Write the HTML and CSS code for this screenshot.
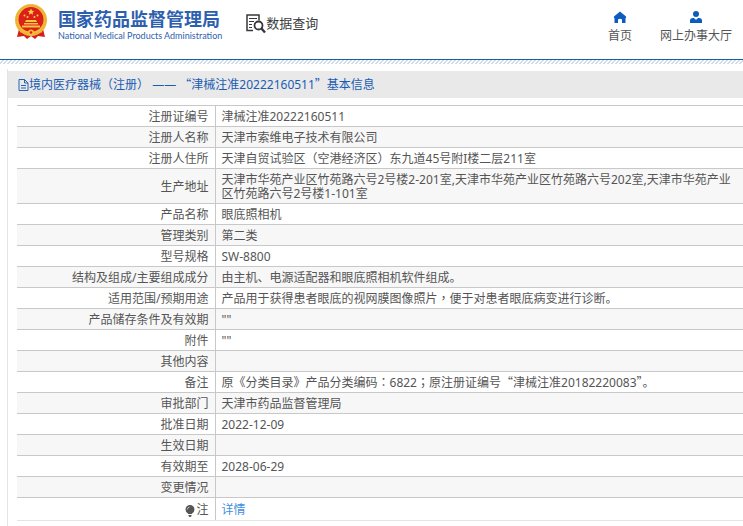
FILE: index.html
```html
<!DOCTYPE html>
<html lang="zh-CN">
<head>
<meta charset="utf-8">
<title>数据查询</title>
<link rel="stylesheet" href="styles.css">
</head>
<body>
<header class="header">
  <a class="brand" href="#">
    <svg class="emblem" viewBox="0 0 34 36" aria-hidden="true">
      <path d="M5 25 L3 33 L10 32 L13 35 L17 32 L21 35 L24 32 L31 33 L29 25Z" fill="#d51f1c"/>
      <circle cx="17" cy="16" r="16" fill="#f0b93a"/>
      <circle cx="17" cy="16" r="14.500" fill="none" stroke="#e8a634" stroke-dasharray="2 1.400"/>
      <circle cx="17" cy="15.500" r="12.500" fill="#dc2018"/>
      <path d="M17 4.500l1 2.200 2.300.2-1.700 1.500.5 2.300-2.100-1.200-2.100 1.200.5-2.300-1.700-1.500 2.300-.2z" fill="#f9d04a"/>
      <g fill="#f9d04a"><circle cx="10.500" cy="11.500" r="1"/><circle cx="13.500" cy="13" r="1"/><circle cx="20.500" cy="13" r="1"/><circle cx="23.500" cy="11.500" r="1"/></g>
      <path d="M12 16h10l1 2H11zM10 19h14v1.500H10zM8 21.500h18v2H8z" fill="#f6c544"/>
      <path d="M6 28q5-2 8 0t6 0 8 0" fill="none" stroke="#f3bd3b" stroke-width="1"/>
      <circle cx="17" cy="28.500" r="3" fill="#f3bd3b"/>
      <circle cx="17" cy="28.500" r="1.300" fill="#d51f1c"/>
    </svg>
    <span class="brand-text">
      <span class="brand-name">国家药品监督管理局</span>
      <span class="brand-sub">National Medical Products Administration</span>
    </span>
  </a>
  <h1 class="section">
    <svg class="section-icon" viewBox="0 0 20 20" aria-hidden="true" fill="none" stroke="#37383d">
      <path d="M13 6.500V1H1v15.500h6" stroke-width="1.500"/>
      <path d="M3 4.500h8M3 7.500h5M3 10.500h3M3 13.500h3" stroke-width="1.200"/>
      <circle cx="12.500" cy="11.500" r="4" stroke-width="1.800"/>
      <path d="M15.500 14.500l3.500 4" stroke-width="2.400"/>
    </svg>
    <span>数据查询</span>
  </h1>
  <nav class="nav">
    <a href="#">
      <svg viewBox="0 0 12 12" aria-hidden="true"><path d="M6 .5L0 5.500V7h.500v5H4V8.500q2-1.500 4 0V12h3.500V7h.500V5.500z" fill="#0b5cbd"/></svg>
      <span>首页</span>
    </a>
    <a href="#">
      <svg viewBox="0 0 12 12" aria-hidden="true"><circle cx="6" cy="3" r="3" fill="#0b5cbd"/><path d="M0 12V9.500Q0 7 3 7h1l2 2 2-2h1q3 0 3 2.500V12z" fill="#0b5cbd"/></svg>
      <span>网上办事大厅</span>
    </a>
  </nav>
</header>
<main class="panel">
  <h2 class="panel-title">
    <svg viewBox="0 0 11 12" aria-hidden="true" fill="none" stroke="#2563b8"><path d="M1 .5h5.500l3.500 3.500v7.500H1zM6.500.5V4H10M3 6.500h5M3 9h5"/></svg><span>境内医疗器械<span class="mid" lang="zh-Hant">（</span>注册<span class="mid" lang="zh-Hant">）</span> —— <span class="quote">“</span>津械注准20222160511<span class="quote">”</span>基本信息</span>
  </h2>
  <table class="info">
    <tbody>
      <tr><th scope="row">注册证编号</th><td>津械注准20222160511</td></tr>
      <tr><th scope="row">注册人名称</th><td>天津市索维电子技术有限公司</td></tr>
      <tr><th scope="row">注册人住所</th><td>天津自贸试验区<span class="mid" lang="zh-Hant">（</span>空港经济区<span class="mid" lang="zh-Hant">）</span>东九道45号附I楼二层211室</td></tr>
      <tr><th scope="row">生产地址</th><td>天津市华苑产业区竹苑路六号2号楼2-201室,天津市华苑产业区竹苑路六号202室,天津市华苑产业区竹苑路六号2号楼1-101室</td></tr>
      <tr><th scope="row">产品名称</th><td>眼底照相机</td></tr>
      <tr><th scope="row">管理类别</th><td>第二类</td></tr>
      <tr><th scope="row">型号规格</th><td>SW-8800</td></tr>
      <tr><th scope="row">结构及组成/主要组成成分</th><td>由主机、电源适配器和眼底照相机软件组成。</td></tr>
      <tr><th scope="row">适用范围/预期用途</th><td>产品用于获得患者眼底的视网膜图像照片<span class="mid" lang="zh-Hant">，</span>便于对患者眼底病变进行诊断。</td></tr>
      <tr><th scope="row">产品储存条件及有效期</th><td>""</td></tr>
      <tr><th scope="row">附件</th><td>""</td></tr>
      <tr><th scope="row">其他内容</th><td></td></tr>
      <tr><th scope="row">备注</th><td>原《分类目录》产品分类编码<span class="mid" lang="zh-Hant">：</span>6822<span class="mid" lang="zh-Hant">；</span>原注册证编号<span class="quote">“</span>津械注准20182220083<span class="quote">”</span>。</td></tr>
      <tr><th scope="row">审批部门</th><td>天津市药品监督管理局</td></tr>
      <tr><th scope="row">批准日期</th><td>2022-12-09</td></tr>
      <tr><th scope="row">生效日期</th><td></td></tr>
      <tr><th scope="row">有效期至</th><td>2028-06-29</td></tr>
      <tr><th scope="row">变更情况</th><td></td></tr>
      <tr class="note"><th scope="row"><svg viewBox="0 0 10 12" aria-hidden="true"><path d="M5 0a4.500 4.500 0 0 1 4.500 4.500Q9.500 7 7 8.500V9H3v-.5Q.5 7 .5 4.500A4.500 4.500 0 0 1 5 0zM3.500 10h3v1l-1 1h-1l-1-1z" fill="#555"/><path d="M2.200 4.500Q2.500 2.500 4.500 2" fill="none" stroke="#ddd" stroke-width=".8"/></svg>注</th><td><a href="#">详情</a></td></tr>
    </tbody>
  </table>
</main>
</body>
</html>
```
FILE: styles.css
```css
* {
  box-sizing: border-box;
}

body {
  margin: 0;
  background: #fff;
  color: #555;
  font: 12px/14px "Noto Sans", "Noto Sans CJK SC", sans-serif;
}

a {
  color: inherit;
  text-decoration: none;
}

svg {
  display: block;
  flex: none;
}

.header {
  display: flex;
  align-items: flex-start;
  height: 59px;
  padding: 4px 11px 0 14px;
}

/* blue rule with a thin hatched strip below the header */
.header + .panel::before {
  content: "";
  display: block;
  height: 4px;
  margin: 0 0 7px -8px;
  border-top: 1px solid #1d5b9b;
  background: linear-gradient(135deg, #fff 37%, #cfdcec 37% 50%, #fff 50% 87%, #cfdcec 87%) 0 0 / 4px 4px;
}

.brand {
  display: flex;
  gap: 10px;
}

.emblem {
  width: 34px;
  height: 36px;
}

.brand-text {
  display: flex;
  flex-direction: column;
  padding-top: 4px;
  color: #2e5fae;
  white-space: nowrap;
}

.brand-name {
  font: bold 18px/20px "Noto Sans CJK SC", sans-serif;
}

.brand-sub {
  font: 400 9px/12px Lato, sans-serif;
  padding-top: 2px;
}

.section {
  display: flex;
  margin: 10px 0 0 24px;
  color: #3b3c41;
  font: 400 13px/18px "Noto Sans CJK SC", sans-serif;
  white-space: nowrap;
}

.section-icon {
  width: 20px;
  height: 20px;
}

.nav {
  display: flex;
  gap: 28px;
  margin: 7px 0 0 auto;
}

.nav a {
  display: flex;
  flex-direction: column;
  align-items: center;
  gap: 6px;
  white-space: nowrap;
}

.nav svg {
  width: 12px;
  height: 12px;
}

.panel {
  margin-left: 7px;
  padding-bottom: 5px;
  border-left: 1px solid #e4e4e4;
  border-image: linear-gradient(transparent 11px, #e4e4e4 11px) 1;
}

.panel-title {
  display: flex;
  align-items: center;
  height: 27px;
  margin: 0 0 7px;
  padding-left: 10px;
  background: #e9e9e9;
  color: #1a5cb4;
  font-size: 12px;
  font-weight: normal;
}

.panel-title svg {
  width: 11px;
  height: 12px;
}

.quote,
.mid {
  font-family: "Noto Sans CJK SC", sans-serif;
  line-height: 1px;
}

.mid {
  font-family: "Noto Sans CJK TC", sans-serif;
}

.info {
  width: calc(100% - 9px);
  margin-left: 9px;
  border-collapse: collapse;
}

.info th,
.info td {
  height: 21px;
  padding: 4px 6px 2px;
  border-top: 1px solid #c8c8c8;
}

.info th {
  width: 198px;
  border-right: 1px solid #c8c8c8;
  font-weight: normal;
  text-align: right;
}

.info td {
  text-align: left;
}

.info tr:nth-child(even) {
  background: #f7f7f7;
}

.info .note th,
.info .note td {
  height: 23px;
  border-bottom: 1px solid #e4e4e4;
}

.note svg {
  display: inline-block;
  width: 10px;
  height: 12px;
  margin-right: 1px;
  vertical-align: middle;
}

.note a {
  color: #3d8ee0;
}
```
